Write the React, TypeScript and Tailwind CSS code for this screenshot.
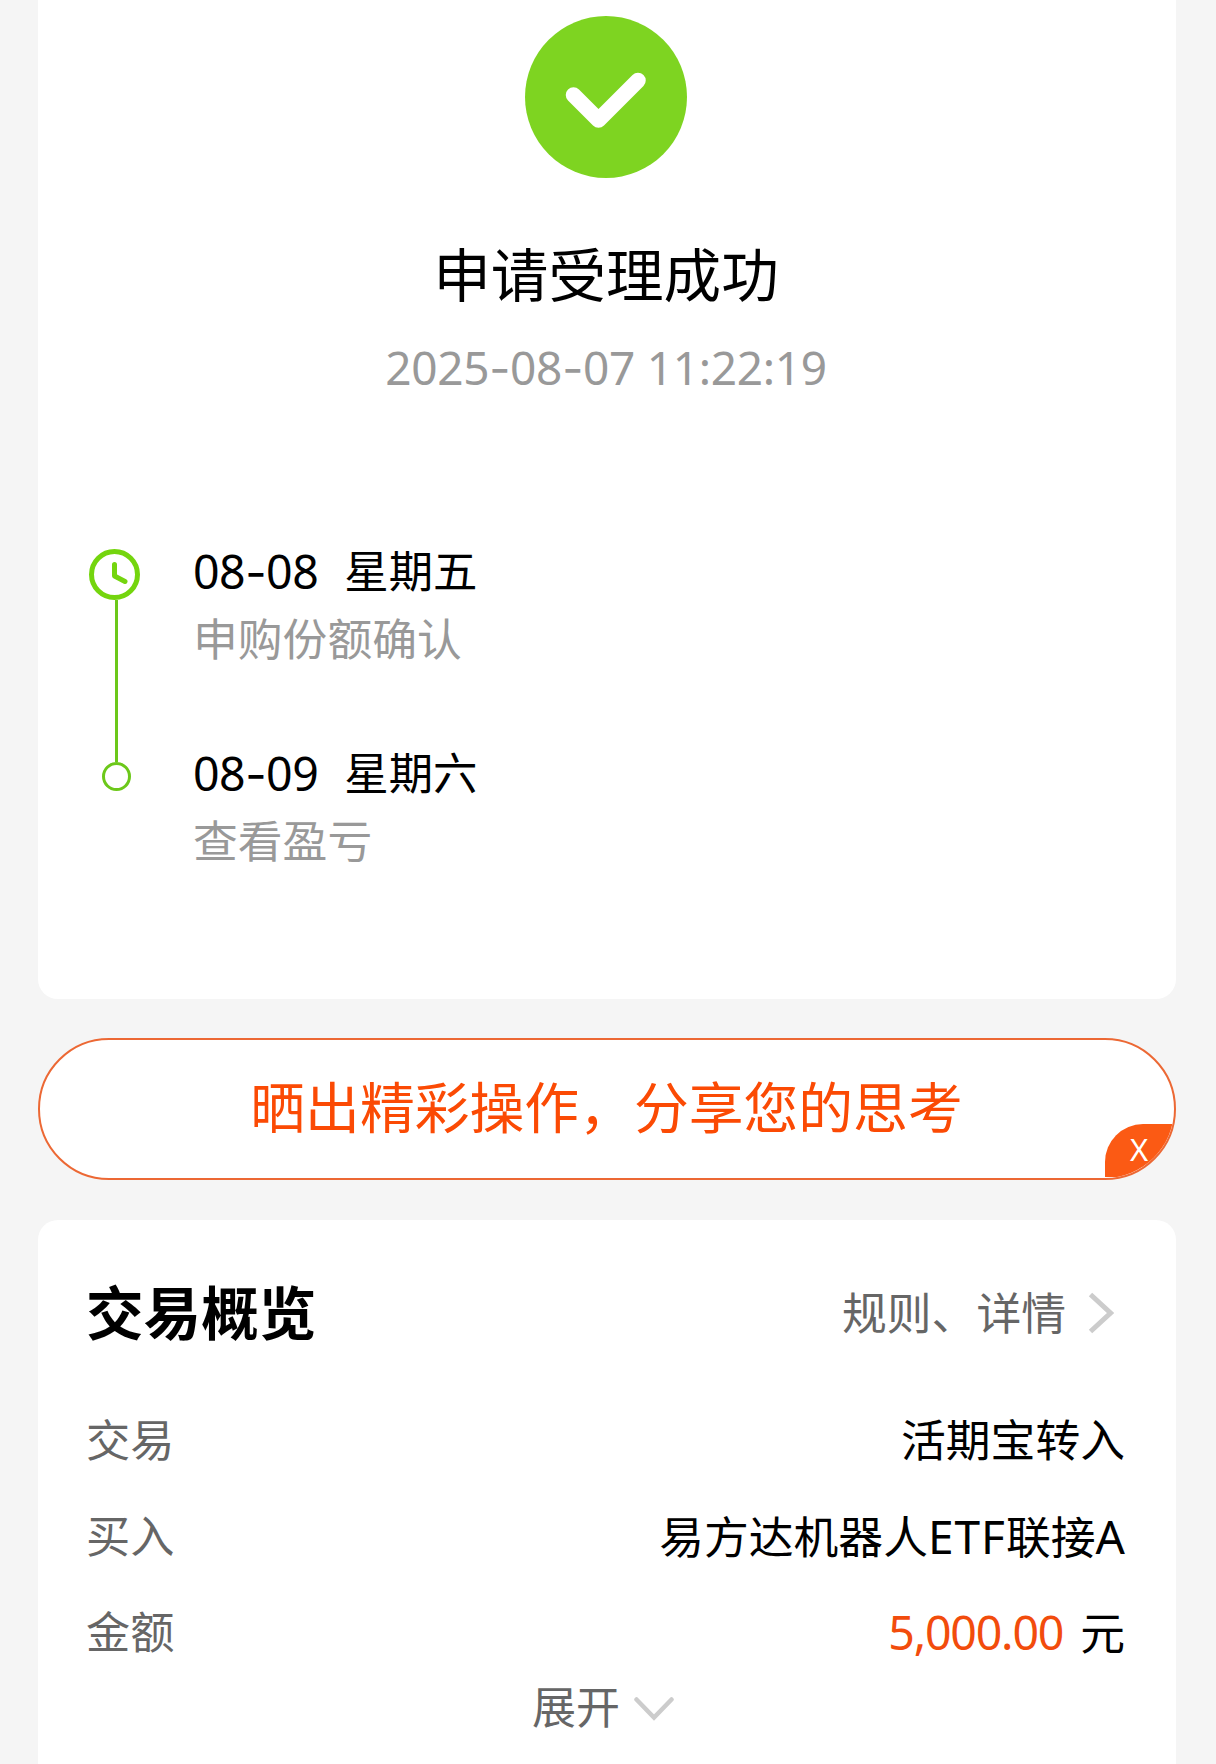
import type { ReactNode } from "react";
import clsx from "clsx";

type Step = { date: string; weekday: string; note: string };

const STEPS: Step[] = [
  { date: "08-08", weekday: "星期五", note: "申购份额确认" },
  { date: "08-09", weekday: "星期六", note: "查看盈亏" },
];

// Digits keep the main face, the hyphen comes from a face with a wider one
function DateText({ value }: { value: string }) {
  return (
    <>
      {value.split("-").map((part, i) => (
        <span key={i}>
          {i > 0 && <span className="font-['Inter']">-</span>}
          {part}
        </span>
      ))}
    </>
  );
}

function SuccessIcon() {
  return (
    <svg width="162" height="162" viewBox="0 0 162 162" fill="none">
      <circle cx="81" cy="81" r="81" fill="#7ed421" />
      <path
        d="M48.5 79 L73.5 104 L113 64.5"
        stroke="#fff"
        strokeWidth="15.5"
        strokeLinecap="round"
        strokeLinejoin="round"
      />
    </svg>
  );
}

function ClockIcon() {
  return (
    <svg width="51" height="51" viewBox="0 0 51 51" fill="none" stroke="#74d50e">
      <circle cx="25.5" cy="25.5" r="23" strokeWidth="5" />
      <path d="M25.5 15.5 V27 L36 32.5" strokeWidth="5" strokeLinecap="round" strokeLinejoin="round" />
    </svg>
  );
}

function Chevron({ down }: { down?: boolean }) {
  return down ? (
    <svg width="40" height="24" viewBox="0 0 40 24" fill="none">
      <path d="M2.5 2.5 L20 20.5 L37.5 2.5" stroke="#ccc" strokeWidth="4.5" strokeLinecap="round" />
    </svg>
  ) : (
    <svg width="26" height="42" viewBox="0 0 26 42" fill="none">
      <path d="M2.5 2.5 L22.5 21 L2.5 39.5" stroke="#ccc" strokeWidth="5" />
    </svg>
  );
}

function Row({ label, children }: { label: string; children: ReactNode }) {
  return (
    <div className="flex h-24 items-center justify-between">
      <span className="text-[44.2px] text-[#666]">{label}</span>
      <span className="text-black">{children}</span>
    </div>
  );
}

export default function App() {
  return (
    <div className="h-[1764px] w-[1216px] overflow-hidden bg-[#f5f5f5] pr-10 pl-[38px] font-['Noto_Sans','Noto_Sans_CJK_SC',sans-serif] text-[44.8px] leading-[64px] text-black">
      {/* Result */}
      <div className="flex h-[999px] flex-col rounded-b-[20px] bg-white pt-4">
        <div className="flex flex-col items-center pr-0.5">
          <SuccessIcon />
          <h1 className="mt-[57px] text-[57.6px] leading-[80px]">申请受理成功</h1>
          <p className="mt-6 text-[46px] leading-[56px] tracking-[-0.3px] text-[#999]">
            <DateText value="2025-08-07 11:22:19" />
          </p>
        </div>

        {/* Timeline */}
        <div className="mt-[143px] flex pl-[51px]">
          <div className="flex w-[104px] flex-col items-start pt-[10px]">
            <ClockIcon />
            <div className="ml-[26px] h-[162px] w-[3px] bg-[#6cc81a]" />
            <div className="ml-[13px] size-[29px] rounded-full border-[3px] border-[#6cc81a]" />
          </div>
          <div>
            {STEPS.map((step, i) => (
              <div key={step.date} className={clsx(i > 0 && "mt-[70px]")}>
                <div className="flex gap-[26px]">
                  <span className="text-[46.5px] tracking-[-0.5px]">
                    <DateText value={step.date} />
                  </span>
                  <span className="text-[44.4px]">{step.weekday}</span>
                </div>
                <div className="mt-[3px] text-[#999]">{step.note}</div>
              </div>
            ))}
          </div>
        </div>
      </div>

      {/* Share banner */}
      <div className="relative mt-[39px] flex h-[142px] items-center justify-center overflow-hidden rounded-full border-2 border-[#ec6834] bg-white">
        <span className="pr-px pb-1 text-[54.8px] leading-[80px] text-[#fb4a04]">晒出精彩操作，分享您的思考</span>
        <button className="absolute right-0 bottom-px flex h-[53px] w-[69px] items-center rounded-tl-[38px] bg-[#fb5a14] pb-[3px] pl-[25px] text-[31px] text-white">
          X
        </button>
      </div>

      {/* Overview */}
      <div className="mt-10 h-[560px] rounded-t-[20px] bg-white pt-[53px] pr-[51px] pl-[48px]">
        <div className="flex h-20 items-center justify-between">
          <h2 className="text-[57.6px] leading-[80px] font-bold">交易概览</h2>
          <div className="flex items-center gap-[22px] pr-[11px] text-[#666]">
            <span>规则、详情</span>
            <Chevron />
          </div>
        </div>
        <div className="mt-[39px]">
          <Row label="交易">活期宝转入</Row>
          <Row label="买入">
            易方达机器人<span className="text-[46px] tracking-[1px]">ETF</span>联接<span className="text-[46px]">A</span>
          </Row>
          <Row label="金额">
            <span className="mr-[17px] text-[46.5px] tracking-[-1.2px] text-[#f24c0c]">5,000.00</span>元
          </Row>
        </div>
        <div className="-mt-[5px] flex items-center justify-center gap-[14px] pr-[5px] text-[#666]">
          <span className="text-[44px]">展开</span>
          <span className="pt-[3px]">
            <Chevron down />
          </span>
        </div>
      </div>
    </div>
  );
}
